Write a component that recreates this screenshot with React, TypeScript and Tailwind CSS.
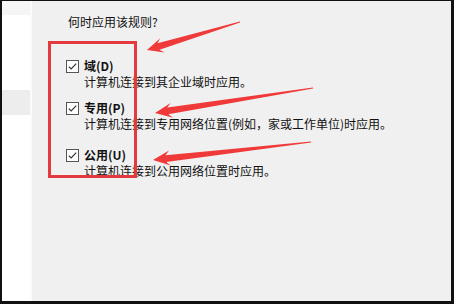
import React from "react";

type Pt = [number, number];

function arrowPoints(tail: Pt, tip: Pt, headLen: number, headHalf: number, shaftEnd: number) {
  const dx = tip[0] - tail[0];
  const dy = tip[1] - tail[1];
  const len = Math.hypot(dx, dy);
  const ux = dx / len;
  const uy = dy / len;
  const px = -uy;
  const py = ux;
  const bc: Pt = [tip[0] - ux * headLen, tip[1] - uy * headLen];
  const shaftBase: Pt = [tip[0] - ux * (headLen - 4), tip[1] - uy * (headLen - 4)];
  const pts: Pt[] = [
    [tail[0] + px * 0.5, tail[1] + py * 0.5],
    [shaftBase[0] + px * shaftEnd, shaftBase[1] + py * shaftEnd],
    [bc[0] + px * headHalf, bc[1] + py * headHalf],
    tip,
    [bc[0] - px * headHalf, bc[1] - py * headHalf],
    [shaftBase[0] - px * shaftEnd, shaftBase[1] - py * shaftEnd],
    [tail[0] - px * 0.5, tail[1] - py * 0.5],
  ];
  return pts.map((p) => `${p[0].toFixed(1)},${p[1].toFixed(1)}`).join(" ");
}

function CheckBox() {
  return (
    <svg width="13" height="13" viewBox="0 0 13 13" className="shrink-0">
      <rect x="0.5" y="0.5" width="12" height="12" fill="#ffffff" stroke="#555555" />
      <path d="M2.8 6.6 L5.2 9 L10.2 3.6" fill="none" stroke="#333333" strokeWidth="1.2" />
    </svg>
  );
}

function Option({ label, desc, className }: { label: string; desc: string; className?: string }) {
  return (
    <div className={className}>
      <div className="flex items-center gap-[5px] h-[16px]">
        <CheckBox />
        <span className="font-bold">{label}</span>
      </div>
      <div className="pl-[18px] h-[16px] whitespace-nowrap">{desc}</div>
    </div>
  );
}

export default function App() {
  return (
    <div
      className="relative w-[454px] h-[304px] bg-[#111111] pt-[1px] pl-[2px] pr-[3px] pb-[3px] flex text-[12px] leading-[16px] text-[#111111]"
      style={{ fontFamily: '"Noto Sans CJK SC", "Noto Sans", sans-serif' }}
    >
      <div className="w-[28px] bg-white flex flex-col">
        <div className="h-[14px] bg-[#f5f5f5]" />
        <div className="h-[75px]" />
        <div className="h-[25px] bg-[#ededed]" />
      </div>
      <div className="w-[2px] bg-[#fbfbfb]" />
      <div className="flex-1 bg-[#f0f0f0] pl-[16px] pt-[13px]">
        <div className="ml-[20px]">何时应用该规则?</div>
        <div className="relative mt-[11px] w-[89px] h-[137px] pt-[17px] pl-[18px]">
          <Option label="域(D)" desc="计算机连接到其企业域时应用。" />
          <Option label="专用(P)" desc="计算机连接到专用网络位置(例如，家或工作单位)时应用。" className="mt-[10px]" />
          <Option label="公用(U)" desc="计算机连接到公用网络位置时应用。" className="mt-[15px]" />
          <div className="absolute inset-0 border-[3px] border-[#e23a3f] pointer-events-none" />
        </div>
      </div>
      <svg className="absolute left-0 top-0 pointer-events-none" width="454" height="304" viewBox="0 0 454 304">
        <polygon points={arrowPoints([240, 22], [147, 50], 16, 7.5, 3.4)} fill="#f03a3a" />
        <polygon points={arrowPoints([313, 88], [155, 113], 17, 7.5, 3.4)} fill="#f03a3a" />
        <polygon points={arrowPoints([311, 142], [153, 160], 17, 7.5, 3.4)} fill="#f03a3a" />
      </svg>
    </div>
  );
}
